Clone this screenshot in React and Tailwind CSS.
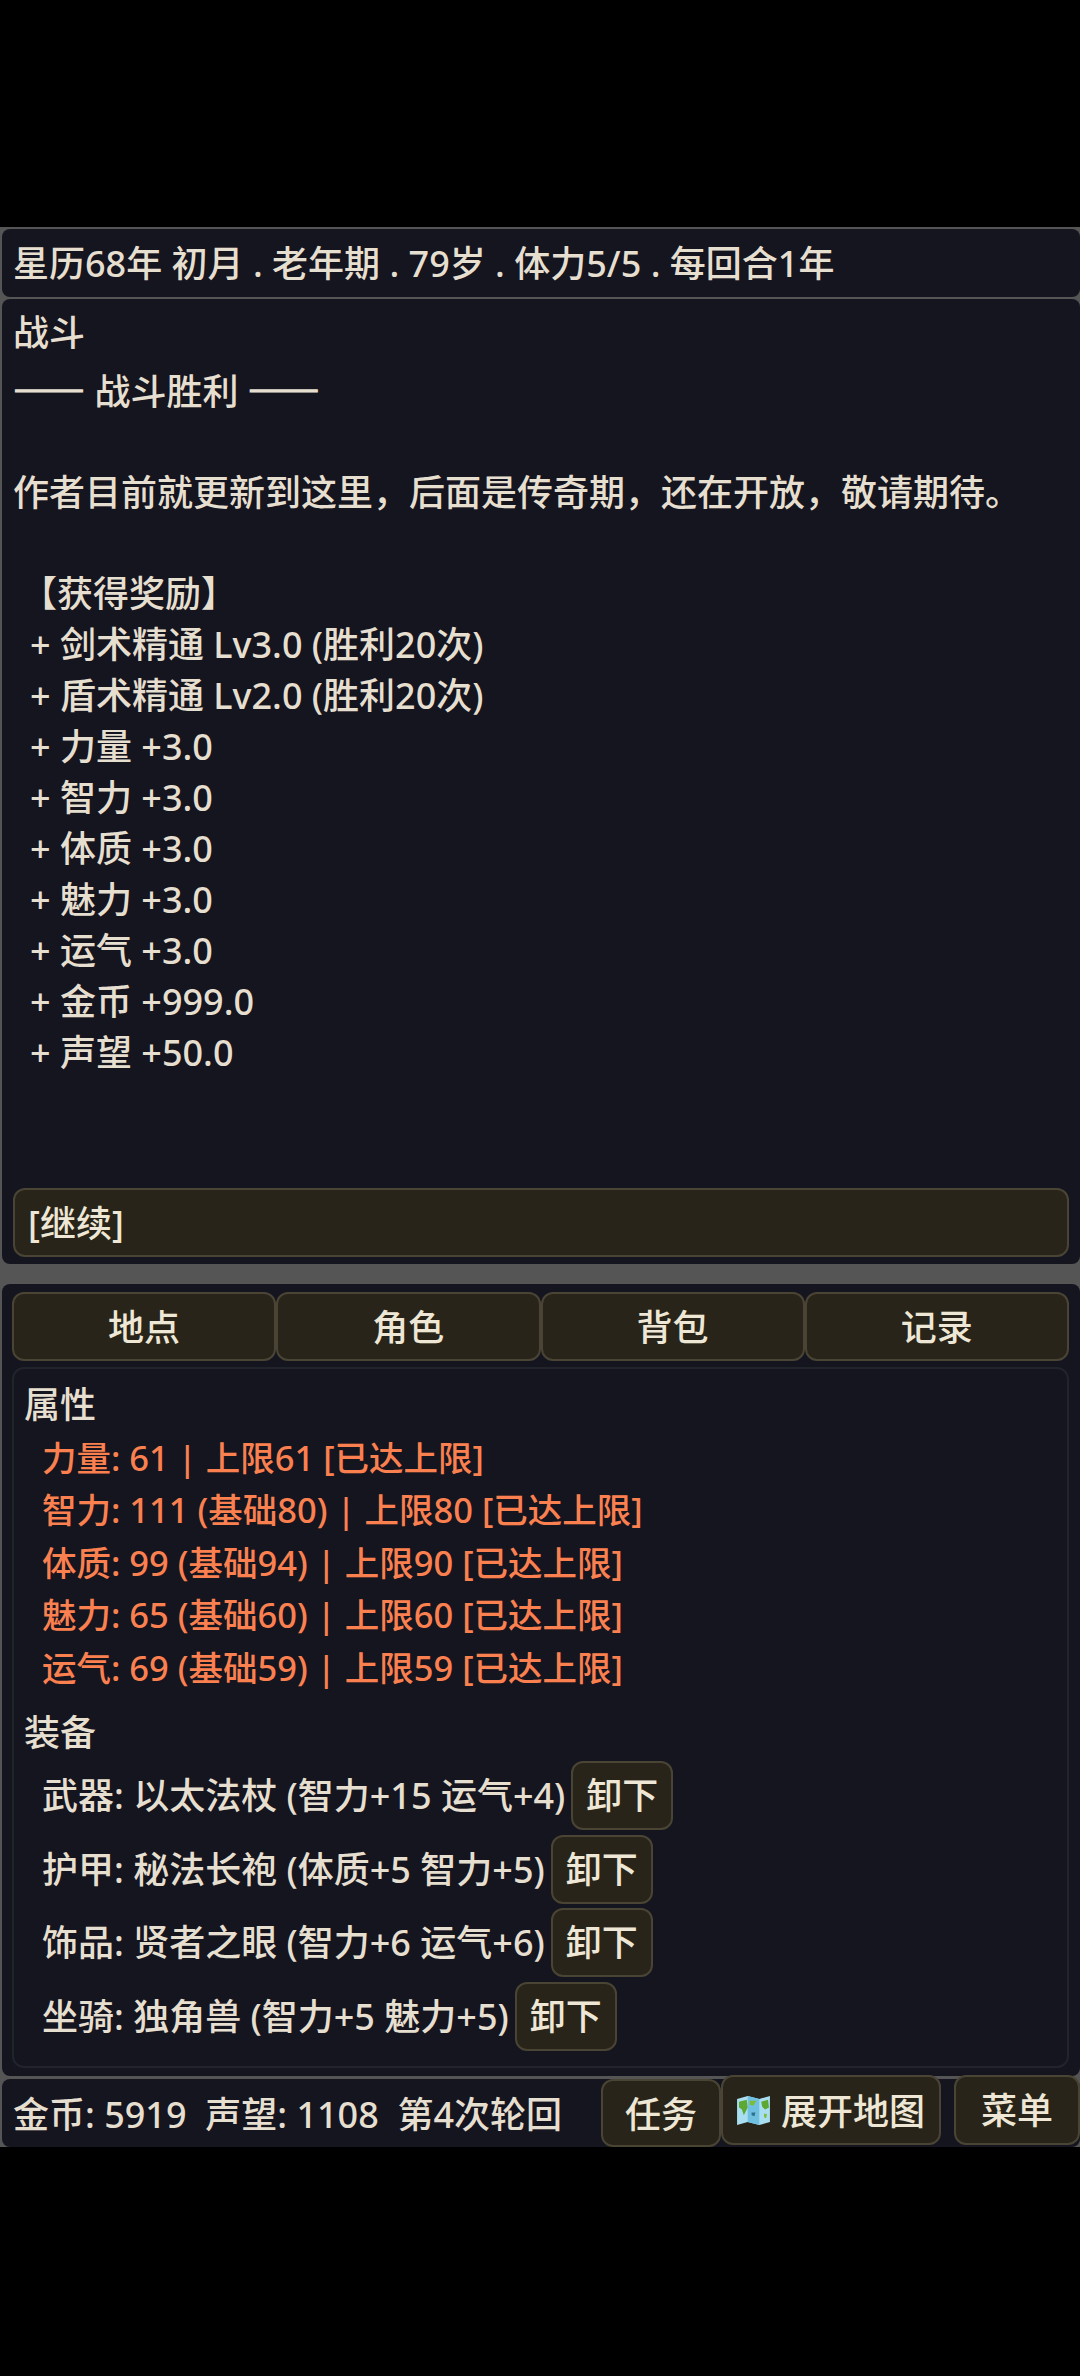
import React from 'react';

const btn = 'border-2 border-[#4a4434] bg-[#28241a] rounded-[12px] text-[#efe7d6]';
const dash = "font-['Noto_Sans_CJK_SC'] font-bold [font-feature-settings:'fwid'] [-webkit-text-stroke:1.5px_#e6dfcf]";

const rewards = ['剑术精通 Lv3.0 (胜利20次)', '盾术精通 Lv2.0 (胜利20次)', '力量 +3.0', '智力 +3.0', '体质 +3.0', '魅力 +3.0', '运气 +3.0', '金币 +999.0', '声望 +50.0'];

const attrs = [
  '力量: 61 | 上限61 [已达上限]',
  '智力: 111 (基础80) | 上限80 [已达上限]',
  '体质: 99 (基础94) | 上限90 [已达上限]',
  '魅力: 65 (基础60) | 上限60 [已达上限]',
  '运气: 69 (基础59) | 上限59 [已达上限]',
];

const gear = [
  '武器: 以太法杖 (智力+15 运气+4)',
  '护甲: 秘法长袍 (体质+5 智力+5)',
  '饰品: 贤者之眼 (智力+6 运气+6)',
  '坐骑: 独角兽 (智力+5 魅力+5)',
];

function MapIcon() {
  return (
    <svg viewBox="0 0 34 30" className="w-[33px] h-[29px] shrink-0">
      <path d="M0 3 L11 0 L23 3 L34 0 V27 L23 30 L11 27 L0 30 Z" fill="#a9def0" />
      <path d="M11 0 L23 3 V30 L11 27 Z" fill="#6fc0e0" />
      <path d="M2 6 L10 4 L11 12 L7 20 L5 14 L2 12 Z" fill="#5ca832" />
      <path d="M13 5 L20 5 L17 10 L13 9 Z" fill="#7dbb3c" />
      <path d="M25 6 L32 4 L33 12 L29 14 L26 11 Z" fill="#5ca832" />
      <path d="M15 17 L19 17 L18 21 L15 20 Z" fill="#2f6f8f" />
      <path d="M28 18 L31 19 L30 23 L28 22 Z" fill="#7dbb3c" />
    </svg>
  );
}

export default function App() {
  return (
    <div className="h-[2376px] bg-black pt-[227px] font-['Noto_Sans','Noto_Sans_CJK_SC',sans-serif] font-medium text-[36px] leading-[51px] text-[#e6dfcf]">
      <div className="h-[1920px] bg-[#555555] flex flex-col">
        <div className="h-[68px] mt-[2px] ml-[2px] bg-[#14151f] rounded-[8px] pl-[11px] pt-[9px] whitespace-pre">星历68年 初月 . 老年期 . 79岁 . 体力5/5 . 每回合1年</div>

        <div className="h-[968px] mt-[2px] ml-[2px] bg-[#14151f] rounded-[8px] pl-[11px] pr-[11px] pt-[8px] flex flex-col">
          <div className="mb-[6px]">战斗</div>
          <div className="whitespace-pre">
            <span className={dash}>——</span> 战斗胜利 <span className={dash}>——</span>
          </div>
          <div className="h-[50px]"></div>
          <div>作者目前就更新到这里，后面是传奇期，还在开放，敬请期待。</div>
          <div className="h-[50px]"></div>
          <div className="pl-[8px]">【获得奖励】</div>
          {rewards.map((r) => (
            <div key={r} className="pl-[17px] whitespace-pre">+ {r}</div>
          ))}
          <button className={`${btn} mt-auto mb-[7px] h-[69px] text-left pl-[13px] pt-[3px]`}>[继续]</button>
        </div>

        <div className="h-[795px] mt-[20px] ml-[2px] bg-[#14151f] rounded-[8px] pl-[10px] pr-[11px] pt-[8px]">
          <div className="grid grid-cols-4 h-[69px]">
            <button className={`${btn} pt-[3px]`}>地点</button>
            <button className={`${btn} pt-[3px]`}>角色</button>
            <button className={`${btn} pt-[3px]`}>背包</button>
            <button className={`${btn} pt-[3px]`}>记录</button>
          </div>
          <div className="h-[701px] mt-[6px] border-2 border-[#22242c] rounded-[12px] pl-[10px] pt-[10px]">
            <div className="mb-[2px]">属性</div>
            <div className="pl-[18px] text-[#fb8050] text-[34.5px] leading-[52.5px]">
              {attrs.map((a) => (
                <div key={a} className="whitespace-pre">{a}</div>
              ))}
            </div>
            <div className="mt-[13px] mb-[3px]">装备</div>
            <div className="pl-[18px] flex flex-col gap-[4.5px]">
              {gear.map((g) => (
                <div key={g} className="flex items-center gap-[6px] whitespace-pre">
                  <span>{g}</span>
                  <button className={`${btn} h-[69px] w-[102px]`}>卸下</button>
                </div>
              ))}
            </div>
          </div>
        </div>

        <div className="h-[68px] mt-[3px] ml-[2px] bg-[#14151f] rounded-[8px] pl-[11px] flex items-center whitespace-pre">
          <span className="mr-auto pt-[3px]">金币: 5919  声望: 1108  第4次轮回</span>
          <button className={`${btn} h-[68px] w-[120px] pt-[2px]`}>任务</button>
          <button className={`${btn} h-[70px] w-[220px] -mt-[6px] flex items-center justify-center gap-[11px]`}>
            <MapIcon />
            <span className="pt-[2px]">展开地图</span>
          </button>
          <button className={`${btn} h-[70px] w-[126px] ml-[13px] -mt-[6px]`}>菜单</button>
        </div>
      </div>
    </div>
  );
}
